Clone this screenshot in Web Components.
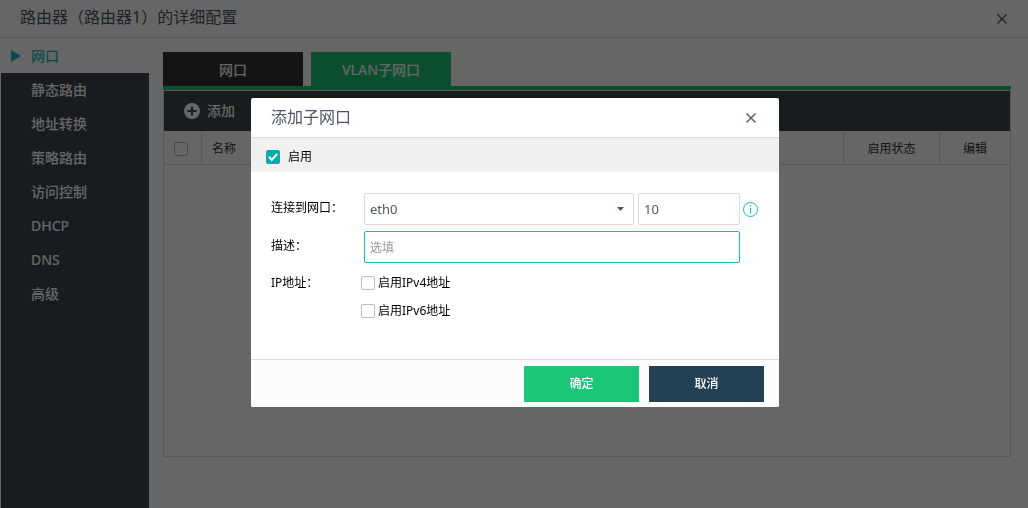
<!DOCTYPE html>
<html lang="zh-CN">
<head>
<meta charset="utf-8">
<title>路由器配置</title>
<style>
body{margin:0;font:14px/20px "Noto Sans","Noto Sans CJK SC",sans-serif;color:#333;background:#fff;
--line:#dcdcdc;--teal:#12bdbe;--green:#1cc677;--dark:#3c464d;--ink:#4d5566}
</style>
</head>
<body>
<config-page heading="路由器（路由器1）的详细配置">
  <side-nav slot="nav">
    <side-item current>网口</side-item>
    <side-item>静态路由</side-item>
    <side-item>地址转换</side-item>
    <side-item>策略路由</side-item>
    <side-item>访问控制</side-item>
    <side-item>DHCP</side-item>
    <side-item>DNS</side-item>
    <side-item>高级</side-item>
  </side-nav>
  <tab-bar>
    <tab-button>网口</tab-button>
    <tab-button selected>VLAN子网口</tab-button>
  </tab-bar>
  <port-table></port-table>
</config-page>
<modal-dialog heading="添加子网口">
  <check-box slot="enable" wide checked>启用</check-box>
  <port-form></port-form>
  <action-button slot="actions">确定</action-button>
  <action-button slot="actions" secondary>取消</action-button>
</modal-dialog>
<script>
function define(name, render) {
  customElements.define(name, class extends HTMLElement {
    constructor() { super(); this.attachShadow({mode: 'open'}); }
    connectedCallback() {
      const t = document.createElement('template');
      t.innerHTML = '<style>*{box-sizing:border-box}button,input,select{font:inherit;margin:0}:host{display:block;box-sizing:border-box}</style>' + render(this);
      this.shadowRoot.replaceChildren(t.content.cloneNode(true));
    }
  });
}

define('title-bar', el => `
<style>
:host{border-bottom:1px solid var(--line);color:var(--ink)}
header{display:flex;align-items:center;justify-content:space-between;padding:0 20px}
h1{margin:0;font-size:16px;line-height:24px;font-weight:400;padding:5px 0 8px}
button{border:0;background:none;color:inherit;padding:0;width:12px;height:12px;display:grid;place-items:center}
:host([compact]) h1{padding:7px 0 8px}
:host([compact]) header{padding:0 22px 0 20px}
</style>
<header><h1>${el.getAttribute('heading')}</h1>
<button aria-label="关闭"><svg width="12" height="12" viewBox="0 0 12 12" fill="none" stroke="currentColor" stroke-width="1.4"><path d="M1.500 1.500l9 9M10.500 1.500l-9 9"/></svg></button></header>`);

define('config-page', el => `
<style>
:host{display:flex;flex-direction:column;min-height:100vh}
.body{display:flex;flex:1;padding-left:1px}
main{flex:1;min-width:0;padding:14px 17px 51px 14px;display:flex;flex-direction:column}
::slotted(side-nav){width:148px;flex:none}
::slotted(port-table){flex:1}
</style>
<title-bar heading="${el.getAttribute('heading')}"></title-bar>
<div class="body"><slot name="nav"></slot><main><slot></slot></main></div>`);

define('side-nav', () => `
<style>nav{background:var(--dark);height:100%}</style>
<nav><slot></slot></nav>`);

define('side-item', () => `
<style>
a{display:flex;align-items:center;height:34px;padding-left:30px;color:#fff;font-weight:500;text-decoration:none;position:relative}
:host([current]) a{background:#fff;color:var(--teal);height:35px}
svg{display:none;position:absolute;left:10px;top:12px}
:host([current]) svg{display:block}
</style>
<a href="#"><svg width="10" height="12" viewBox="0 0 10 12"><path d="M0 0l10 6-10 6z" fill="currentColor"/></svg><slot></slot></a>`);

define('tab-bar', () => `
<style>
:host{border-bottom:4px solid var(--green)}
div{display:flex;gap:8px}
</style>
<div role="tablist"><slot></slot></div>`);

define('tab-button', el => `
<style>
button{display:block;width:140px;height:34px;border:0;background:#323232;color:#fff;font-weight:500;padding:2px 0 0}
:host([selected]) button{background:var(--green)}
</style>
<button role="tab" aria-selected="${el.hasAttribute('selected')}"><slot></slot></button>`);

define('port-table', () => `
<style>
:host{border:1px solid var(--line)}
.tools{background:var(--dark);height:40px;display:flex;align-items:center;padding-left:20px}
.tools button{display:flex;align-items:center;gap:7px;border:0;background:none;color:#fff;font-weight:500;padding:0}
table{width:100%;border-collapse:separate;border-spacing:0;table-layout:fixed;font-size:12px}
th{height:34px;padding:2px 0 0;font-weight:400;border-right:1px solid var(--line);border-bottom:1px solid var(--line)}
th:last-child{border-right:0}
.sel{width:38px}.name{text-align:left;padding-left:10px}.state{width:96px}.edit{width:70px}
check-box{width:14px;margin-left:10px}
</style>
<div class="tools"><button><svg width="16" height="16" viewBox="0 0 16 16"><circle cx="8" cy="8" r="8" fill="#fff"/><path d="M8 3.500v9M3.500 8h9" stroke="#3c464d" stroke-width="2"/></svg>添加</button></div>
<table><thead><tr><th class="sel"><check-box label="全选"></check-box></th><th class="name">名称</th><th class="state">启用状态</th><th class="edit">编辑</th></tr></thead></table>`);

define('check-box', el => `
<style>
label{display:flex;align-items:center;gap:3px;font-size:12px}
:host([wide]) label{gap:8px}
.box{display:grid;flex:none}
input,svg{grid-area:1/1}
input{appearance:none;width:14px;height:14px;border:1px solid #bbb;border-radius:2px;background:#fff}
svg{display:none;pointer-events:none}
input:checked{background:#05abae;border-color:#05abae}
input:checked+svg{display:block}
</style>
<label><span class="box"><input type="checkbox" aria-label="${el.getAttribute('label') || el.textContent}"${el.hasAttribute('checked') ? ' checked' : ''}><svg width="14" height="14" viewBox="0 0 14 14" fill="none" stroke="#fff" stroke-width="2"><path d="M2.800 6.800l3 3 5.400-6"/></svg></span><slot></slot></label>`);

define('modal-dialog', el => `
<style>
:host{position:fixed;inset:0;display:flex;align-items:center;justify-content:center;background:rgba(0,0,0,.6);padding:0 0 3px 2px}
section{width:528px;background:#fff;border-radius:2px;overflow:hidden;color:#000}
.enable{background:#f0f0f0;padding:9px 15px 5px}
footer{display:flex;justify-content:flex-end;gap:10px;border-top:1px solid var(--line);background:#fcfcfc;padding:6px 15px 5px}
</style>
<section role="dialog" aria-label="${el.getAttribute('heading')}">
<title-bar compact heading="${el.getAttribute('heading')}"></title-bar>
<div class="enable"><slot name="enable"></slot></div>
<slot></slot>
<footer><slot name="actions"></slot></footer>
</section>`);

define('port-form', () => `
<style>
:host{padding:21px 20px 34px}
form{display:grid;grid-template-columns:90px 1fr;row-gap:6px;font-size:12px}
form>label{line-height:30px}
.caption{line-height:28px}
.row{display:flex;gap:4px;align-items:center;padding-left:3px}
.pick{display:grid;width:270px;align-items:center}
select,.pick svg{grid-area:1/1}
.pick svg{justify-self:end;margin-right:10px;pointer-events:none}
select,input{appearance:none;height:32px;border:1px solid var(--line);border-radius:2px;background:#fff;color:var(--ink);padding:0 5px;outline:0;font-size:13px}
select{width:100%}
#tag{width:102px}
#note{width:376px;border-color:var(--teal);font-size:12px}
#note::placeholder{color:#999}
.info{margin-left:-1px}
check-box{padding:4px 0}
</style>
<form>
<label for="port">连接到网口：</label>
<div class="row"><span class="pick"><select id="port"><option>eth0</option></select><svg width="7" height="4" viewBox="0 0 7 4"><path d="M0 0h7L3.500 4z" fill="#4d5566"/></svg></span>
<input id="tag" value="10" aria-label="VLAN ID">
<svg class="info" width="15" height="15" viewBox="0 0 15 15" fill="none" stroke="#12bdbe"><circle cx="7.500" cy="7.500" r="7"/><path d="M7.500 6v5.500M7.500 3.500v1.200"/></svg></div>
<label for="note">描述：</label>
<div class="row"><input id="note" placeholder="选填"></div>
<span class="caption">IP地址：</span>
<div><check-box>启用IPv4地址</check-box><check-box>启用IPv6地址</check-box></div>
</form>`);

define('action-button', () => `
<style>
button{display:block;width:115px;height:36px;border:0;background:var(--green);color:#fff;font-size:12px;font-weight:500;padding:0}
:host([secondary]) button{background:#234055}
</style>
<button><slot></slot></button>`);
</script>
</body>
</html>
